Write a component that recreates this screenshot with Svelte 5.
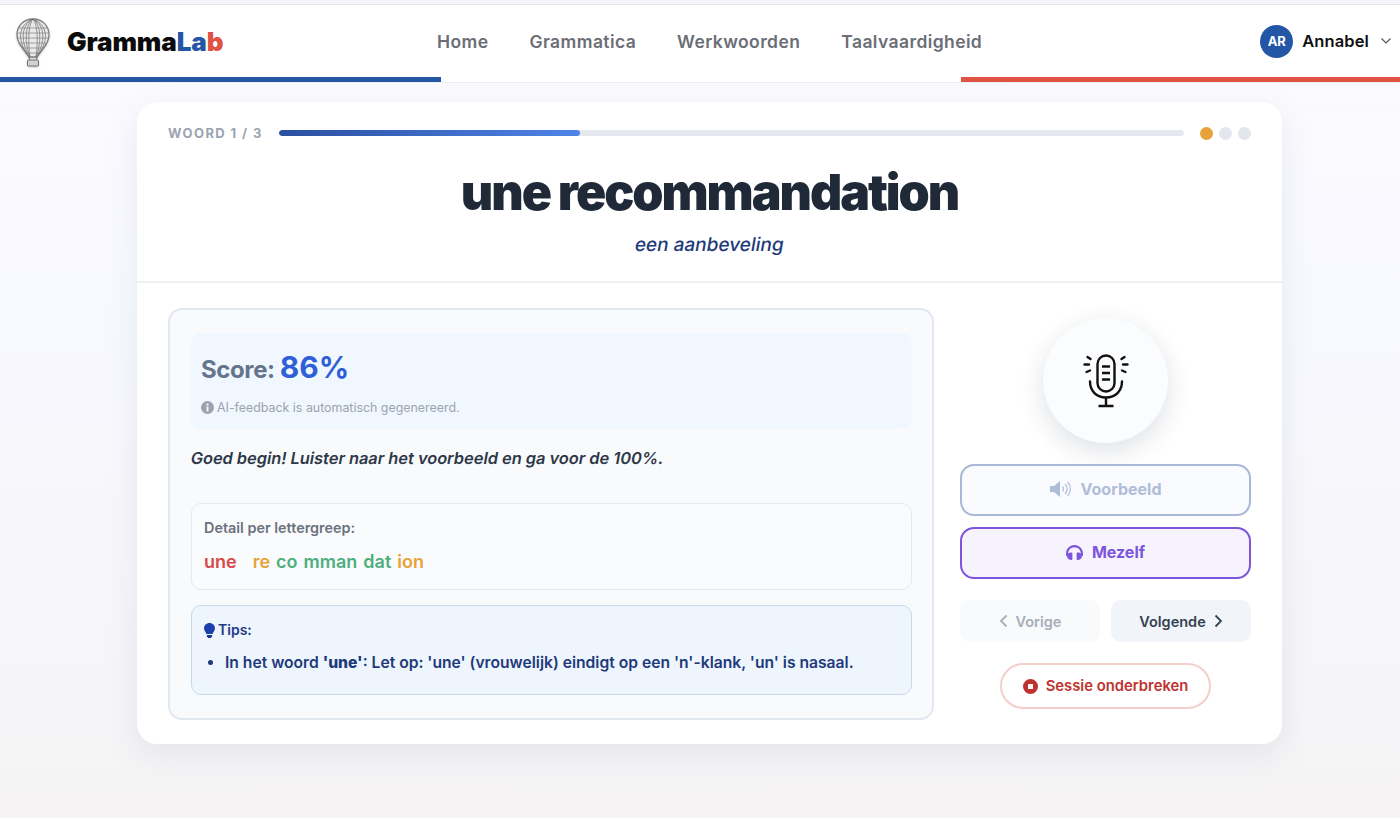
<script>
  const navItems = ['Home', 'Grammatica', 'Werkwoorden', 'Taalvaardigheid'];
  const syllables = [
    { text: 'une', color: '#d9484c', gap: 16 },
    { text: 're', color: '#e9a23b', gap: 6 },
    { text: 'co', color: '#4caf7d', gap: 6 },
    { text: 'mman', color: '#4caf7d', gap: 6 },
    { text: 'dat', color: '#4caf7d', gap: 6 },
    { text: 'ion', color: '#e9a23b', gap: 0 }
  ];
  const meridians = [3, 6.5, 10.5, 14];
</script>

<div class="page">
  <div class="top-strip"></div>
  <header class="header">
    <div class="header-row">
      <div class="logo">
        <svg class="balloon" width="38" height="50" viewBox="0 0 38 50" fill="none">
          <path d="M19 2C9.5 2 3 9 3 18c0 8 6 13 12 22h8c6-9 12-14 12-22 0-9-6.500-16-16-16z" fill="#eaeaea" stroke="#7d7d7d" stroke-width="1.300"/>
          {#each meridians as m}
            <path d="M19 2C{m} 8 {m} 26 16 40" stroke="#7a7a7a" stroke-width=".8"/>
            <path d="M19 2C{38 - m} 8 {38 - m} 26 22 40" stroke="#7a7a7a" stroke-width=".8"/>
          {/each}
          <path d="M4 11h30M3 16h32M3.500 21h31M6 26h26M10 31h18M13 36h12" stroke="#8a8a8a" stroke-width=".8"/>
          <path d="M15 40l1 6M23 40l-1 6" stroke="#666" stroke-width=".9"/>
          <rect x="13.500" y="43" width="11" height="6" rx="1" fill="#d2d2d2" stroke="#707070" stroke-width="1"/>
        </svg>
        <span class="logo-text">Gramma<span class="logo-la">La</span><span class="logo-b">b</span></span>
      </div>
      <nav class="nav">
        {#each navItems as item}
          <span class="nav-item">{item}</span>
        {/each}
      </nav>
      <div class="user">
        <span class="avatar">AR</span>
        <span class="user-name">Annabel</span>
        <svg width="12" height="8" viewBox="0 0 12 8" fill="none"><path d="M1.500 1.500L6 6l4.500-4.500" stroke="#555" stroke-width="1.200"/></svg>
      </div>
    </div>
    <div class="accent">
      <span class="accent-blue"></span>
      <span></span>
      <span class="accent-red"></span>
    </div>
  </header>

  <main class="main">
    <section class="card">
      <div class="card-top">
        <div class="progress-row">
          <span class="progress-label">WOORD 1 / 3</span>
          <div class="track"><div class="fill" style="width: 33.3%"></div></div>
          <div class="dots">
            <span class="dot active"></span>
            <span class="dot"></span>
            <span class="dot"></span>
          </div>
        </div>
        <h1 class="word">une recommandation</h1>
        <div class="translation"><span class="slant">een aanbeveling</span></div>
      </div>

      <div class="card-body">
        <div class="panel">
          <div class="score-box">
            <div class="score-line">
              <span class="score-label">Score:</span>
              <span class="score-value">86%</span>
            </div>
            <div class="ai-note">
              <svg width="13" height="13" viewBox="0 0 13 13"><circle cx="6.500" cy="6.500" r="6.500" fill="#9ca3af"/><rect x="5.500" y="2.500" width="2" height="2" fill="#f0f7ff"/><rect x="5.500" y="5.500" width="2" height="5" fill="#f0f7ff"/></svg>
              <span>AI-feedback is automatisch gegenereerd.</span>
            </div>
          </div>
          <div class="feedback"><span class="slant">Goed begin! Luister naar het voorbeeld en ga voor de 100%.</span></div>
          <div class="detail">
            <div class="detail-title">Detail per lettergreep:</div>
            <div class="syllables">
              {#each syllables as s}
                <span style="color: {s.color}; margin-right: {s.gap}px">{s.text}</span>
              {/each}
            </div>
          </div>
          <div class="tips">
            <div class="tips-title">
              <svg width="11" height="15" viewBox="0 0 11 15"><path d="M5.500 0C2.400 0 0 2.300 0 5.200c0 2.400 1.800 3.600 2.400 5.800h6.200C9.200 8.800 11 7.600 11 5.200 11 2.300 8.600 0 5.500 0z" fill="#1e40af"/><path d="M2.900 12h5.200v1.200L6.800 15H4.200L2.900 13.200z" fill="#1e3a8a"/></svg>
              <span>Tips:</span>
            </div>
            <ul class="tips-list">
              <li>In het woord <strong>'une'</strong>: Let op: 'une' (vrouwelijk) eindigt op een 'n'-klank, 'un' is nasaal.</li>
            </ul>
          </div>
        </div>

        <aside class="side">
          <div class="mic">
            <svg width="46" height="54" viewBox="0 0 46 54" fill="none" stroke="#111" stroke-width="2.400" stroke-linecap="round">
              <rect x="14.500" y="1.500" width="17" height="36" rx="8.500"/>
              <path d="M19 12.500h8M19 19h8M19 25.500h8" stroke-linecap="butt"/>
              <path d="M7 27.500c0 9.500 6.500 16 16 16s16-6.500 16-16"/>
              <path d="M23 43.500V52M15.500 52h15" stroke-linecap="butt"/>
              <path d="M4.500 3l3 2M1.500 10.500h4.500M3.500 18l3.500-1.500M41.500 3l-3 2M44.500 10.500H40M42.500 18l-3.500-1.500"/>
            </svg>
          </div>
          <button class="btn-wide voorbeeld">
            <svg width="22" height="16" viewBox="0 0 22 16" fill="none"><path d="M0 5h4l6-5v16l-6-5H0z" fill="#afbdd8"/><path d="M12.500 5.500a3.500 3.500 0 0 1 0 5M15 3a7 7 0 0 1 0 10M17.500 1a10 10 0 0 1 0 14" stroke="#afbdd8" stroke-width="1.200"/></svg>
            <span>Voorbeeld</span>
          </button>
          <button class="btn-wide mezelf">
            <svg width="17" height="17" viewBox="0 0 512 512"><path fill="#7c55dc" d="M256 32C114.520 32 0 146.496 0 288v48a32 32 0 0 0 17.689 28.622l14.383 7.192C34.083 431.903 83.421 480 144 480h24c13.255 0 24-10.745 24-24V280c0-13.255-10.745-24-24-24h-24c-31.342 0-59.671 12.879-80 33.627V288c0-105.869 86.131-192 192-192s192 86.131 192 192v1.627C427.671 268.879 399.342 256 368 256h-24c-13.255 0-24 10.745-24 24v176c0 13.255 10.745 24 24 24h24c60.579 0 109.917-48.098 111.928-108.187l14.382-7.191A32 32 0 0 0 512 336v-48c0-141.504-114.520-256-256-256z"/></svg>
            <span>Mezelf</span>
          </button>
          <div class="step-row">
            <button class="step prev">
              <svg width="9" height="14" viewBox="0 0 9 14" fill="none"><path d="M7.500 1.500L2 7l5.500 5.500" stroke="#aab0ba" stroke-width="1.800"/></svg>
              <span>Vorige</span>
            </button>
            <button class="step next">
              <span>Volgende</span>
              <svg width="9" height="14" viewBox="0 0 9 14" fill="none"><path d="M1.500 1.500L7 7l-5.500 5.500" stroke="#374151" stroke-width="1.800"/></svg>
            </button>
          </div>
          <button class="stop">
            <svg width="15" height="15" viewBox="0 0 15 15"><path fill="#c0322f" fill-rule="evenodd" d="M7.500 0a7.500 7.500 0 1 0 0 15 7.500 7.500 0 0 0 0-15zM5 5h5v5H5z"/></svg>
            <span>Sessie onderbreken</span>
          </button>
        </aside>
      </div>
    </section>
  </main>
</div>

<style>
  :global(body) {
    margin: 0;
    font-family: "Inter", "Liberation Sans", sans-serif;
  }

  .page {
    height: 818px;
    overflow: hidden;
    background: linear-gradient(180deg, #fbfbfe 0%, #f8f9ff 40%, #f5f3f4 100%);
  }

  .top-strip {
    height: 4px;
    background: #f6f3fb;
    border-bottom: 1px solid #e6e3ee;
  }

  .header {
    background: #fff;
    border-bottom: 1px solid #eceef3;
  }

  .header-row {
    height: 72px;
    display: grid;
    grid-template-columns: 437px 1fr auto;
    align-items: center;
  }

  .logo {
    display: flex;
    align-items: center;
    padding-left: 14px;
    gap: 15px;
  }

  .balloon {
    filter: blur(0.3px) drop-shadow(0 1px 1px rgba(0, 0, 0, 0.2));
    margin-top: 2px;
  }

  .logo-text {
    font-size: 26px;
    font-weight: 900;
    color: #0b0b0b;
    letter-spacing: -0.1px;
  }

  .logo-la {
    color: #2456a6;
  }

  .logo-b {
    color: #e05343;
  }

  .nav {
    display: flex;
    gap: 41px;
  }

  .nav-item {
    font-size: 17.500px;
    font-weight: 600;
    color: #6b6e76;
    letter-spacing: 0.4px;
  }

  .user {
    display: flex;
    align-items: center;
    padding-right: 8px;
  }

  .avatar {
    width: 33px;
    height: 33px;
    border-radius: 50%;
    background: #2456a6;
    color: #fff;
    font-size: 13px;
    font-weight: 700;
    display: flex;
    align-items: center;
    justify-content: center;
    margin-right: 9px;
  }

  .user-name {
    font-size: 16.500px;
    font-weight: 600;
    letter-spacing: 0.1px;
    color: #111;
    margin-right: 11px;
  }

  .accent {
    display: grid;
    grid-template-columns: 441px 1fr 439px;
    height: 5px;
  }

  .accent-blue {
    background: #2456a6;
  }

  .accent-red {
    background: #e05343;
  }

  .main {
    display: flex;
    padding: 19px 0 0 137px;
  }

  .card {
    width: 1145px;
    height: 642px;
    background: #fff;
    border-radius: 20px;
    box-shadow: 0 10px 34px rgba(30, 50, 100, 0.08);
  }

  .card-top {
    height: 179px;
    padding: 0 31px;
    border-bottom: 2px solid #eef0f4;
  }

  .progress-row {
    display: flex;
    align-items: center;
    height: 62px;
  }

  .progress-label {
    font-size: 13px;
    font-weight: 700;
    letter-spacing: 1.4px;
    color: #9ca3af;
    white-space: nowrap;
    width: 111px;
  }

  .track {
    flex: 1;
    height: 6px;
    border-radius: 3px;
    background: #e5e8ef;
    overflow: hidden;
  }

  .fill {
    height: 100%;
    border-radius: 3px;
    background: linear-gradient(90deg, #2a4f9f, #4f84e8);
  }

  .dots {
    display: flex;
    gap: 6px;
    margin-left: 16px;
  }

  .dot {
    width: 13px;
    height: 13px;
    border-radius: 50%;
    background: #e2e6ed;
  }

  .dot.active {
    background: #e9a23b;
  }

  .word {
    margin: -1px 0 0;
    text-align: center;
    font-size: 50px;
    line-height: 58px;
    font-weight: 900;
    letter-spacing: -2.050px;
    color: #1f2937;
  }

  .slant {
    display: inline-block;
    transform: skewX(-10deg);
  }

  .translation {
    margin-top: 11px;
    text-align: center;
    font-size: 19px;
    line-height: 26px;
    font-weight: 500;
    color: #1e3a7a;
  }

  .card-body {
    display: flex;
    gap: 26px;
    padding: 25px 31px 0;
  }

  .panel {
    width: 766px;
    height: 412px;
    box-sizing: border-box;
    border: 2px solid #e2e8f0;
    border-radius: 14px;
    background: #f8fafc;
    padding: 23px 20px 0 21px;
  }

  .score-box {
    height: 96px;
    box-sizing: border-box;
    background: #f0f7ff;
    border-radius: 10px;
    padding: 16px 10px 0;
  }

  .score-line {
    display: flex;
    align-items: baseline;
    gap: 5px;
    height: 40px;
  }

  .score-label {
    font-size: 24px;
    font-weight: 700;
    letter-spacing: -0.4px;
    color: #64748b;
  }

  .score-value {
    font-size: 30px;
    font-weight: 700;
    color: #2f5fd8;
  }

  .ai-note {
    display: flex;
    align-items: center;
    gap: 3px;
    margin-top: 11px;
    font-size: 12.400px;
    color: #9ca3af;
  }

  .feedback {
    margin-top: 19px;
    font-size: 16.350px;
    line-height: 20px;
    font-weight: 600;
    color: #2d3748;
  }

  .detail {
    height: 87px;
    box-sizing: border-box;
    margin-top: 35px;
    background: #fafbfc;
    border: 1px solid #e5e8ee;
    border-radius: 10px;
    padding: 15px 12px 0;
  }

  .detail-title {
    font-size: 14.400px;
    line-height: 18px;
    font-weight: 600;
    color: #6b7280;
  }

  .syllables {
    display: flex;
    margin-top: 14px;
    font-size: 18px;
    line-height: 22px;
    font-weight: 600;
  }

  .tips {
    height: 90px;
    box-sizing: border-box;
    margin-top: 15px;
    background: #eef5fd;
    border: 1px solid #c6daee;
    border-radius: 10px;
    padding: 15px 12px 0;
  }

  .tips-title {
    display: flex;
    align-items: center;
    gap: 3px;
    font-size: 14px;
    line-height: 18px;
    font-weight: 600;
    color: #1e3a8a;
  }

  .tips-list {
    margin: 14px 0 0;
    padding-left: 21px;
    font-size: 15.650px;
    line-height: 20px;
    font-weight: 600;
    color: #1e3a7a;
  }

  .tips-list strong {
    font-weight: 800;
  }

  .side {
    width: 291px;
    display: flex;
    flex-direction: column;
    align-items: center;
  }

  .mic {
    width: 125px;
    height: 125px;
    margin-top: 10px;
    border-radius: 50%;
    background: #fbfcfe;
    box-shadow: 0 8px 26px rgba(30, 40, 70, 0.14);
    display: flex;
    align-items: center;
    justify-content: center;
  }

  button {
    font-family: inherit;
    cursor: pointer;
    display: flex;
    align-items: center;
    justify-content: center;
  }

  .btn-wide {
    width: 100%;
    height: 52px;
    border-radius: 14px;
    font-size: 16px;
    font-weight: 700;
    gap: 9px;
    padding-bottom: 3px;
  }

  .voorbeeld {
    margin-top: 21px;
    background: #fafbfe;
    border: 2px solid #a9b8d6;
    color: #afbdd8;
  }

  .mezelf {
    margin-top: 11px;
    background: #f6f3fe;
    border: 2px solid #7c55dc;
    color: #7c55dc;
  }

  .step-row {
    width: 100%;
    display: flex;
    gap: 11px;
    margin-top: 21px;
  }

  .step {
    flex: 1;
    height: 42px;
    border: none;
    border-radius: 10px;
    font-size: 14.500px;
    font-weight: 600;
    gap: 8px;
  }

  .prev {
    background: #f8fafc;
    color: #a7adb7;
  }

  .next {
    background: #f1f5f9;
    color: #374151;
  }

  .stop {
    margin-top: 21px;
    width: 211px;
    height: 46px;
    border-radius: 23px;
    background: #fff;
    border: 2px solid #f3cfcd;
    color: #c0322f;
    font-size: 14.800px;
    font-weight: 600;
    gap: 8px;
  }
</style>
